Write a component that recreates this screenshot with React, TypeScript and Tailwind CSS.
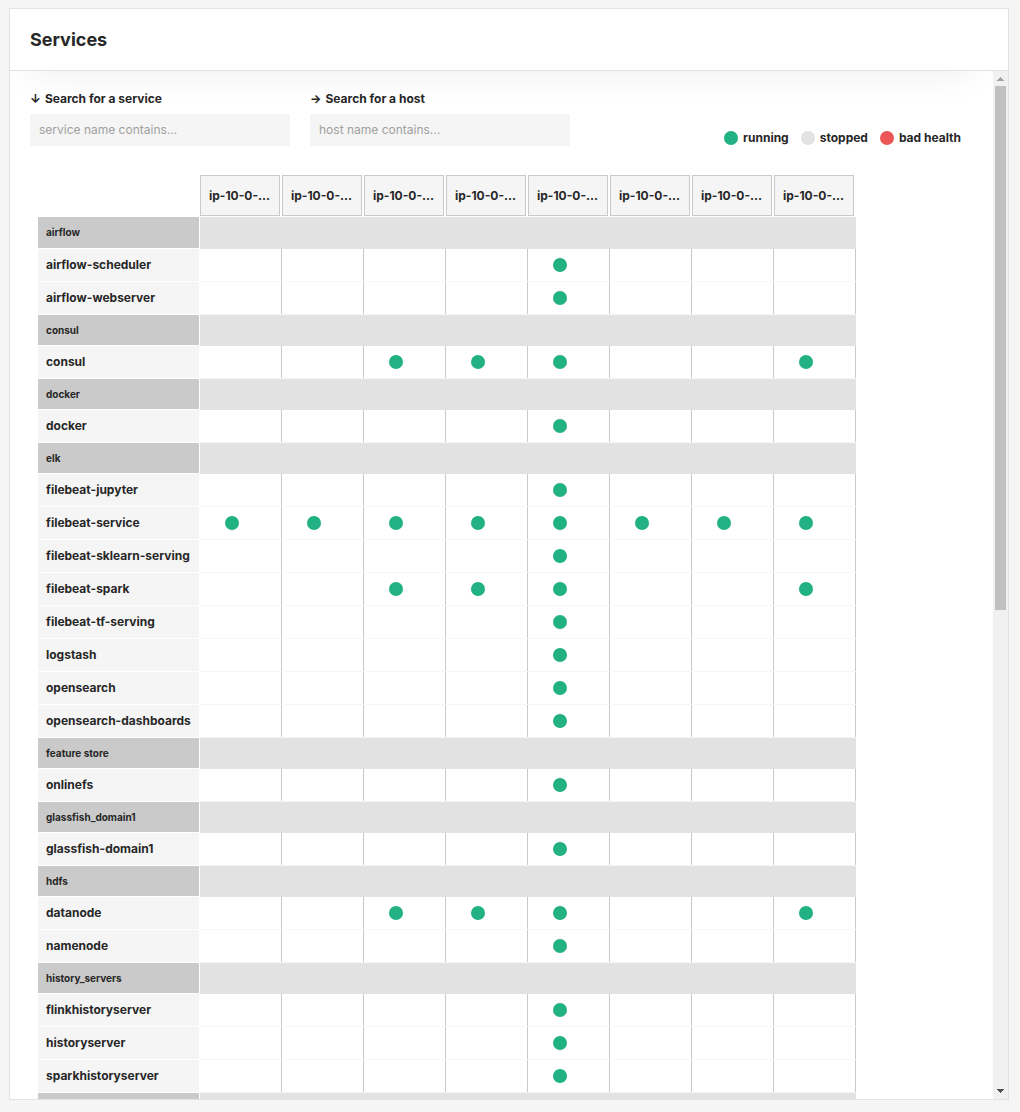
import React, { useState } from "react";

type Service = { name: string; hosts: number[] };
type Group = { name: string; services: Service[] };

const hosts = [0, 1, 2, 3, 4, 5, 6, 7];

const groups: Group[] = [
  { name: "airflow", services: [{ name: "airflow-scheduler", hosts: [4] }, { name: "airflow-webserver", hosts: [4] }] },
  { name: "consul", services: [{ name: "consul", hosts: [2, 3, 4, 7] }] },
  { name: "docker", services: [{ name: "docker", hosts: [4] }] },
  {
    name: "elk",
    services: [
      { name: "filebeat-jupyter", hosts: [4] },
      { name: "filebeat-service", hosts: [0, 1, 2, 3, 4, 5, 6, 7] },
      { name: "filebeat-sklearn-serving", hosts: [4] },
      { name: "filebeat-spark", hosts: [2, 3, 4, 7] },
      { name: "filebeat-tf-serving", hosts: [4] },
      { name: "logstash", hosts: [4] },
      { name: "opensearch", hosts: [4] },
      { name: "opensearch-dashboards", hosts: [4] },
    ],
  },
  { name: "feature store", services: [{ name: "onlinefs", hosts: [4] }] },
  { name: "glassfish_domain1", services: [{ name: "glassfish-domain1", hosts: [4] }] },
  { name: "hdfs", services: [{ name: "datanode", hosts: [2, 3, 4, 7] }, { name: "namenode", hosts: [4] }] },
  {
    name: "history_servers",
    services: [
      { name: "flinkhistoryserver", hosts: [4] },
      { name: "historyserver", hosts: [4] },
      { name: "sparkhistoryserver", hosts: [4] },
    ],
  },
  { name: "", services: [] },
];

function SearchField({ id, arrow, label, placeholder }: { id: string; arrow: string; label: string; placeholder: string }) {
  const [value, setValue] = useState("");
  return (
    <div className="flex w-[260px] flex-col gap-[7px]">
      <label htmlFor={id} className="flex gap-1 text-xs leading-4 font-bold">
        <span aria-hidden="true">{arrow}</span>
        <span>{label}</span>
      </label>
      <input
        id={id}
        value={value}
        onChange={(e) => setValue(e.target.value)}
        placeholder={placeholder}
        className="h-8 w-full bg-[#f5f5f5] px-[9px] pb-0.5 text-xs outline-none placeholder:text-[#a0a0a0]"
      />
    </div>
  );
}

function Legend({ color, label }: { color: string; label: string }) {
  return (
    <li className="flex items-center gap-[5px]">
      <span className={"size-3.5 rounded-full " + color} />
      {label}
    </li>
  );
}

function ScrollTrack() {
  return (
    <div aria-hidden="true" className="flex w-[15px] shrink-0 flex-col items-center bg-[#f1f1f1]">
      <svg width="15" height="15" viewBox="0 0 15 15" shapeRendering="crispEdges" className="shrink-0">
        <path d="M7 6h1v1h1v1h1v1h1v1H4V9h1V8h1V7h1z" fill="#a3a3a3" />
      </svg>
      <div className="min-h-0 w-full flex-1 px-0.5">
        <div className="h-[52.5%] w-[11px] bg-[#c1c1c1]" />
      </div>
      <svg width="15" height="15" viewBox="0 0 15 15" shapeRendering="crispEdges" className="shrink-0">
        <path d="M4 5h7v1h-1v1H9v1H8v1H7V8H6V7H5V6H4z" fill="#505050" />
      </svg>
    </div>
  );
}

export default function App() {
  return (
    <div className="h-screen bg-[#f5f5f5] pt-2 pr-[11px] pb-3 pl-[9px] font-['Inter',sans-serif] text-[#272727]">
      <main className="flex h-full flex-col border border-[#e2e2e2] bg-white">
        <header className="relative z-10 border-b border-[#e2e2e2] bg-white px-5 py-[17px]">
          <h1 className="text-lg leading-[27px] font-bold">Services</h1>
        </header>
        <div className="flex min-h-0 flex-1">
          <div className="min-w-0 flex-1 overflow-hidden bg-white">
            <div className="relative flex items-end justify-between px-5 pt-5">
              <div className="pointer-events-none absolute inset-x-0 top-0 h-10 overflow-hidden">
                <div className="mx-5 -mt-10 h-10 shadow-[0_4px_35px_rgba(0,0,0,0.065)]" />
              </div>
              <form className="flex gap-5">
                <SearchField id="service" arrow="↓" label="Search for a service" placeholder="service name contains..." />
                <SearchField id="host" arrow="→" label="Search for a host" placeholder="host name contains..." />
              </form>
              <ul className="mr-3 flex gap-3 text-xs leading-4 font-bold">
                <Legend color="bg-[#21b182]" label="running" />
                <Legend color="bg-[#e2e2e2]" label="stopped" />
                <Legend color="bg-[#eb5757]" label="bad health" />
              </ul>
            </div>
            <table className="mt-[29px] ml-7 table-fixed border-collapse text-left text-xs leading-4">
              <colgroup>
                <col className="w-[162px]" />
                {hosts.map((h) => (
                  <col key={h} className="w-[82px]" />
                ))}
              </colgroup>
              <thead>
                <tr className="h-[42px]">
                  <td />
                  {hosts.map((h) => (
                    <th key={h} scope="col" className="p-0 align-top">
                      <div className="mr-0.5 h-[41px] truncate border border-[#cacaca] bg-[#f5f5f5] px-2 text-xs leading-[39px] font-bold">
                        ip-10-0-…
                      </div>
                    </th>
                  ))}
                </tr>
              </thead>
              {groups.map((g, i) => (
                <tbody key={g.name}>
                  <tr className={i === 0 ? "h-8" : "h-[31px]"}>
                    <th scope="rowgroup" className="p-0 pr-px align-top">
                      <div className={(i === 0 ? "h-[31px]" : "h-[30px]") + " bg-[#cacaca] px-2 text-[10px] leading-[30px] font-bold"}>
                        {g.name}
                      </div>
                    </th>
                    <td colSpan={8} className="bg-[#e2e2e2] p-0" />
                  </tr>
                  {g.services.map((s) => (
                    <tr key={s.name} className="h-[33px]">
                      <th scope="row" className="p-0 pr-px align-top">
                        <div className="h-8 bg-[#f5f5f5] px-2 text-xs leading-8 font-bold whitespace-nowrap">{s.name}</div>
                      </th>
                      {hosts.map((h) => (
                        <td key={h} className="p-0 align-top">
                          <div className="flex h-8 items-center border-r border-[#cacaca] pl-[25px]">
                            {s.hosts.includes(h) && <span role="img" aria-label="running" className="size-3.5 rounded-full bg-[#21b182]" />}
                          </div>
                          <div className="h-px bg-[#f5f5f5]" />
                        </td>
                      ))}
                    </tr>
                  ))}
                </tbody>
              ))}
            </table>
          </div>
          <ScrollTrack />
        </div>
      </main>
    </div>
  );
}
